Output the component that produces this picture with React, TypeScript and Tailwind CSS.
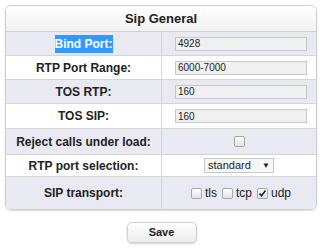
import React from "react";

const rows = [
  { label: "Bind Port:", kind: "input", value: "4928", h: "h-[24px]", alt: true, selected: true },
  { label: "RTP Port Range:", kind: "input", value: "6000-7000", h: "h-[24px]", alt: false },
  { label: "TOS RTP:", kind: "input", value: "160", h: "h-[24px]", alt: true },
  { label: "TOS SIP:", kind: "input", value: "160", h: "h-[25px]", alt: false },
  { label: "Reject calls under load:", kind: "check", h: "h-[26px]", alt: true },
  { label: "RTP port selection:", kind: "select", h: "h-[22px]", alt: false },
  { label: "SIP transport:", kind: "transport", h: "h-[32px]", alt: true },
];

function Box({ checked }: { checked?: boolean }) {
  return (
    <span className="inline-flex h-[11px] w-[11px] items-center justify-center rounded-[2px] border border-[#a8a8a8] bg-gradient-to-b from-[#fdfdfd] to-[#e4e4e4]">
      {checked && (
        <svg width="9" height="9" viewBox="0 0 9 9">
          <path d="M1.5 4.5 L3.5 6.8 L7.6 1.6" fill="none" stroke="#222" strokeWidth="1.6" />
        </svg>
      )}
    </span>
  );
}

export default function App() {
  return (
    <div className="h-[250px] w-[323px] bg-white font-['Liberation_Sans',Arial,sans-serif] text-[#222]">
      <div className="pl-[5px] pt-[5px]">
        <div className="w-[312px] overflow-hidden rounded-[6px] border border-[#cfcfcf] shadow-[0_1px_2px_rgba(0,0,0,0.15)]">
          <div className="flex h-[26px] items-center justify-center border-b border-[#cfcfcf] bg-gradient-to-b from-white to-[#f1f1f1] text-[13px] font-bold">
            Sip General
          </div>
          {rows.map((r, i) => (
            <div
              key={r.label}
              className={`flex ${r.h} ${i < rows.length - 1 ? "border-b border-[#d6d6d6]" : ""} ${r.alt ? "bg-[#e9e9f2]" : "bg-white"}`}
            >
              <div className="flex w-[156px] items-center justify-center border-r border-[#d6d6d6] text-[12px] font-bold">
                {r.selected ? <span className="bg-[#3399ff] text-white">{r.label}</span> : r.label}
              </div>
              <div className="flex flex-1 items-center">
                {r.kind === "input" && (
                  <div className="ml-[13px] flex h-[14px] w-[132px] items-center border border-[#c8c8c8] bg-[#f0f0f0] pl-[2px] text-[10px]">
                    {r.value}
                  </div>
                )}
                {r.kind === "check" && (
                  <div className="flex w-full justify-center">
                    <Box />
                  </div>
                )}
                {r.kind === "select" && (
                  <div className="flex w-full justify-center">
                    <div className="flex h-[15px] w-[70px] items-center justify-between border border-[#c8c8c8] bg-[#f7f7f7] px-[3px] text-[11px]">
                      <span>standard</span>
                      <span className="text-[8px]">▼</span>
                    </div>
                  </div>
                )}
                {r.kind === "transport" && (
                  <div className="ml-[4px] flex w-full items-center justify-center gap-[3px] text-[12px]">
                    <Box />
                    <span className="mr-[2px]">tls</span>
                    <Box />
                    <span className="mr-[2px]">tcp</span>
                    <Box checked />
                    <span>udp</span>
                  </div>
                )}
              </div>
            </div>
          ))}
        </div>
      </div>
      <div className="mt-[12px] flex justify-center">
        <button className="h-[21px] w-[70px] rounded-[5px] border border-[#d0d0d0] bg-gradient-to-b from-white to-[#ececec] text-[11px] font-bold text-[#222] shadow-[0_1px_2px_rgba(0,0,0,0.2)]">
          Save
        </button>
      </div>
    </div>
  );
}
